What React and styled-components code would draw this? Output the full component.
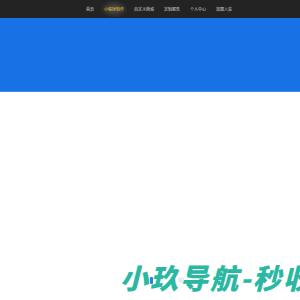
import React from "react";
import styled, { createGlobalStyle } from "styled-components";

const GlobalStyle = createGlobalStyle`
  html, body {
    margin: 0;
    padding: 0;
    background: #fff;
    overflow: hidden;
  }
  body {
    font-family: "Noto Sans CJK SC", "Noto Sans", sans-serif;
  }
`;

const Page = styled.div`
  width: 300px;
  height: 300px;
  display: flex;
  flex-direction: column;
  overflow: hidden;
`;

const NavBar = styled.nav`
  height: 18px;
  background: #232323;
  display: flex;
  align-items: center;
  padding-left: 86px;
  gap: 10px;
`;

const NavItem = styled.a`
  position: relative;
  font-size: 4px;
  line-height: 18px;
  white-space: nowrap;
  color: ${(p) => (p.$active ? "#e6c428" : "#d8d8d8")};
  text-decoration: none;
  background: ${(p) =>
    p.$active
      ? "radial-gradient(ellipse at center, rgba(120,120,120,0.55) 0%, rgba(35,35,35,0) 70%)"
      : "none"};
  padding: 0 ${(p) => (p.$active ? "4px" : "0")};
  margin: 0 ${(p) => (p.$active ? "-4px" : "0")};
`;

const Banner = styled.div`
  height: 73px;
  background: #1872e6;
  border-bottom: 1px solid #3a8cf0;
`;

const Content = styled.div`
  flex: 1;
  background: #fff;
  padding-top: 169px;
  padding-left: 120px;
  overflow: hidden;
`;

const Slogan = styled.div`
  position: relative;
  white-space: nowrap;
  font-family: "Noto Sans CJK SC", sans-serif;
  font-weight: 900;
  font-style: italic;
  font-size: 28px;
  line-height: 32px;
  letter-spacing: 2px;
  color: #2bb8a2;
`;

const Cursor = styled.span`
  position: absolute;
  left: 30px;
  top: 16px;
  width: 3px;
  height: 7px;
  background: #2b7be8;
  border-radius: 1px;
`;

const Dot = styled.span`
  position: absolute;
  left: 58px;
  top: 16px;
  width: 6px;
  height: 6px;
  border-radius: 50%;
  background: rgba(220, 225, 235, 0.7);
`;

const items = ["首页", "小程序制作", "自定义商城", "定制服务", "个人中心", "加盟入驻"];

export default function App() {
  return (
    <Page>
      <GlobalStyle />
      <NavBar>
        {items.map((t, i) => (
          <NavItem key={i} href="#" $active={i === 1}>
            {t}
          </NavItem>
        ))}
      </NavBar>
      <Banner />
      <Content>
        <Slogan>
          小玖导航-秒收录网站
          <Cursor />
          <Dot />
        </Slogan>
      </Content>
    </Page>
  );
}
